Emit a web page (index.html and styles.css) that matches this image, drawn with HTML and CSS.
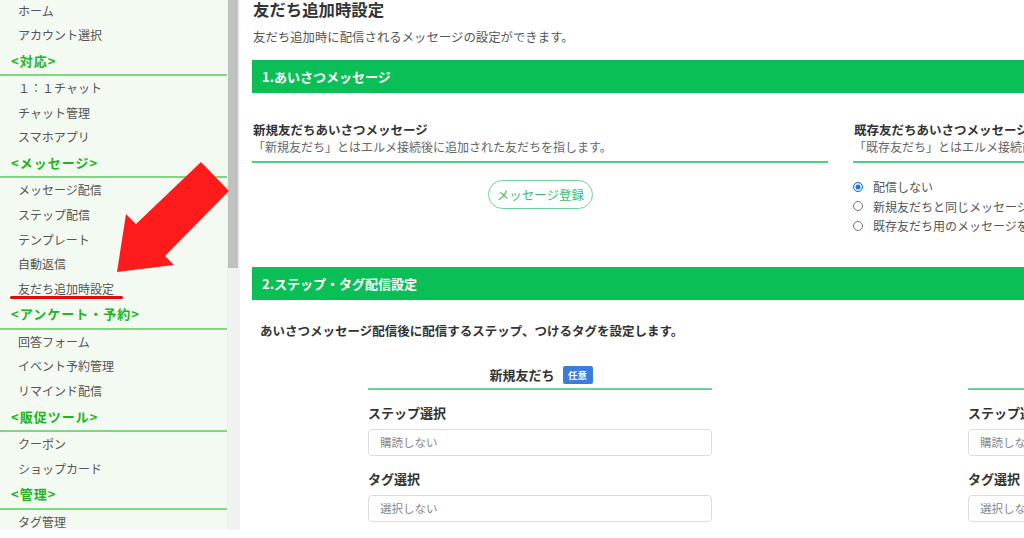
FILE: index.html
```html
<!DOCTYPE html>
<html lang="ja">
<head>
<meta charset="utf-8">
<title>友だち追加時設定</title>
<link rel="stylesheet" href="styles.css">
</head>
<body>
<div class="page">
  <aside class="sidebar">
    <ul class="nav">
      <li class="item">ホーム</li>
      <li class="item">アカウント選択</li>
      <li class="group">&lt;対応&gt;</li>
      <li class="item">１：１チャット</li>
      <li class="item">チャット管理</li>
      <li class="item">スマホアプリ</li>
      <li class="group">&lt;メッセージ&gt;</li>
      <li class="item">メッセージ配信</li>
      <li class="item">ステップ配信</li>
      <li class="item">テンプレート</li>
      <li class="item">自動返信</li>
      <li class="item item-marked">友だち追加時設定</li>
      <li class="group">&lt;アンケート・予約&gt;</li>
      <li class="item">回答フォーム</li>
      <li class="item">イベント予約管理</li>
      <li class="item">リマインド配信</li>
      <li class="group">&lt;販促ツール&gt;</li>
      <li class="item">クーポン</li>
      <li class="item">ショップカード</li>
      <li class="group">&lt;管理&gt;</li>
      <li class="item">タグ管理</li>
    </ul>
  </aside>
  <div class="scrollbar"><div class="thumb"></div></div>

  <main class="main">
    <h1 class="title">友だち追加時設定</h1>
    <p class="lead">友だち追加時に配信されるメッセージの設定ができます。</p>

    <div class="banner">1.あいさつメッセージ</div>
    <div class="greet">
      <section class="greet-col">
        <div class="greet-head">
          <h2 class="greet-title">新規友だちあいさつメッセージ</h2>
          <p class="greet-desc">「新規友だち」とはエルメ接続後に追加された友だちを指します。</p>
        </div>
        <div class="btn-row"><button class="btn-outline">メッセージ登録</button></div>
      </section>
      <section class="greet-col">
        <div class="greet-head">
          <h2 class="greet-title">既存友だちあいさつメッセージ</h2>
          <p class="greet-desc">「既存友だち」とはエルメ接続前に友だち追加していた友だちを指します。</p>
        </div>
        <ul class="radios">
          <li class="radio-row"><span class="radio checked"></span>配信しない</li>
          <li class="radio-row"><span class="radio"></span>新規友だちと同じメッセージを配信する</li>
          <li class="radio-row"><span class="radio"></span>既存友だち用のメッセージを配信する</li>
        </ul>
      </section>
    </div>

    <div class="banner banner-2">2.ステップ・タグ配信設定</div>
    <p class="lead-bold">あいさつメッセージ配信後に配信するステップ、つけるタグを設定します。</p>
    <div class="steps">
      <section class="step-col">
        <div class="step-head">新規友だち<span class="badge">任意</span></div>
        <div class="field-label">ステップ選択</div>
        <div class="select">購読しない</div>
        <div class="field-label">タグ選択</div>
        <div class="select">選択しない</div>
      </section>
      <section class="step-col">
        <div class="step-head">既存友だち<span class="badge">任意</span></div>
        <div class="field-label">ステップ選択</div>
        <div class="select">購読しない</div>
        <div class="field-label">タグ選択</div>
        <div class="select">選択しない</div>
      </section>
    </div>
  </main>

  <svg class="arrow" width="240" height="300" viewBox="0 0 240 300">
    <polygon points="201,162 229,191 165,256 174,265 117,272 126,214 136,224" fill="#fe1b1b"/>
  </svg>
</div>
</body>
</html>
```

FILE: styles.css
```css
* { box-sizing: border-box; }
html, body {
  margin: 0;
  padding: 0;
  background: #fff;
  overflow: hidden;
  height: 538px;
}
body {
  font-family: "Noto Sans CJK JP", "Noto Sans", sans-serif;
  color: #555;
}
.page {
  position: relative;
  display: flex;
  align-items: flex-start;
  width: 1024px;
  height: 538px;
  overflow: hidden;
}

/* sidebar */
.sidebar {
  flex: none;
  width: 227px;
  height: 530px;
  overflow: hidden;
  background: #f3faf2;
}
.nav {
  list-style: none;
  margin: -1.3px 0 0;
  padding: 0;
}
.item {
  height: 24.6px;
  line-height: 24.6px;
  padding-left: 18px;
  font-size: 12px;
  color: #555;
  white-space: nowrap;
}
.item-marked { position: relative; }
.item-marked::after {
  content: "";
  position: absolute;
  left: 10px;
  top: 19px;
  width: 113px;
  height: 3px;
  border-radius: 2px;
  background: #e8070b;
}
.group {
  height: 28.4px;
  line-height: 26.4px;
  padding-left: 11px;
  font-size: 13px;
  font-weight: 700;
  letter-spacing: 1px;
  color: #21b521;
  border-bottom: 2px solid #7fd680;
  white-space: nowrap;
}

.scrollbar {
  flex: none;
  width: 13px;
  height: 530px;
  background: #f1f1f1;
  padding: 0 2px 0 1px;
}
.thumb {
  height: 268px;
  background: #c1c1c1;
}

/* main */
.main {
  flex: none;
  width: 1200px;
  padding-left: 12px;
}
.title {
  margin: -1px 0 0 1px;
  font-size: 16.4px;
  line-height: 20px;
  font-weight: 700;
  color: #333;
}
.lead {
  margin: 9px 0 0 1px;
  font-size: 12.4px;
  line-height: 18px;
  color: #555;
}
.banner {
  margin-top: 14px;
  height: 33px;
  line-height: 33px;
  padding-left: 10px;
  background: #0abf56;
  color: #fff;
  font-size: 13px;
  font-weight: 700;
}
.greet {
  display: flex;
  gap: 25px;
  padding-top: 27.5px;
}
.greet-col {
  flex: none;
  width: 576px;
}
.greet-head {
  padding: 0 0 6.5px 1px;
  border-bottom: 2px solid #4fcf80;
}
.greet-title {
  margin: 0;
  font-size: 12.5px;
  line-height: 17px;
  font-weight: 700;
  color: #333;
}
.greet-desc {
  margin: 0;
  font-size: 12px;
  line-height: 17px;
  color: #666;
}
.btn-row {
  display: flex;
  justify-content: center;
  padding-top: 17px;
}
.btn-outline {
  height: 29px;
  width: 105px;
  padding: 0;
  border: 1.5px solid #6cd397;
  border-radius: 15px;
  background: #fff;
  color: #3cbd6d;
  font-family: inherit;
  font-size: 12.5px;
  margin-left: 1px;
}
.radios {
  list-style: none;
  margin: 14px 0 0;
  padding: 0;
}
.radio-row {
  display: flex;
  align-items: center;
  gap: 10px;
  height: 19.5px;
  font-size: 12px;
  color: #555;
  white-space: nowrap;
}
.radio {
  flex: none;
  width: 10px;
  height: 10px;
  border-radius: 50%;
  border: 1px solid #767676;
  background: #fff;
}
.radio.checked {
  border-color: #1a73e8;
  background: #1a73e8;
  box-shadow: inset 0 0 0 1.5px #fff;
}

.banner-2 { margin-top: 31.5px; }
.lead-bold {
  margin: 22px 0 0 8px;
  font-size: 12.5px;
  line-height: 18px;
  font-weight: 700;
  color: #333;
}
.steps {
  display: flex;
  gap: 256px;
  padding-left: 116px;
  margin-top: 26px;
}
.step-col {
  flex: none;
  width: 344px;
}
.step-head {
  display: flex;
  justify-content: center;
  align-items: center;
  height: 24px;
  padding-bottom: 4px;
  line-height: 18px;
  font-size: 13px;
  font-weight: 700;
  color: #333;
  border-bottom: 2px solid #68d493;
  padding-left: 2px;
}
.badge {
  margin-left: 8px;
  width: 30px;
  height: 18px;
  line-height: 18px;
  text-align: center;
  border-radius: 2px;
  background: #3b7dd8;
  color: #fff;
  font-size: 9.5px;
  font-weight: 700;
}
.field-label {
  margin-top: 14px;
  font-size: 13px;
  line-height: 18px;
  font-weight: 700;
  color: #333;
}
.select {
  margin-top: 7px;
  height: 27px;
  line-height: 25px;
  padding-left: 11px;
  border: 1px solid #dcdcdc;
  border-radius: 4px;
  font-size: 11.5px;
  color: #888;
}

.arrow {
  position: absolute;
  left: 0;
  top: 0;
}
```
